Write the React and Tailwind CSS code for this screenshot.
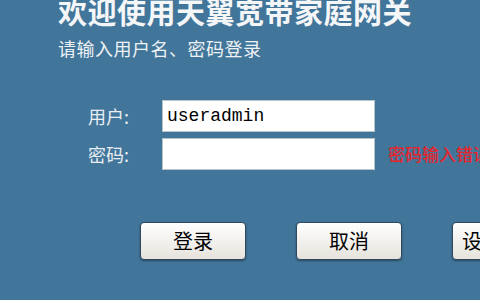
import React from 'react'

const CN = { fontFamily: '"Noto Sans CJK SC", "Liberation Sans", sans-serif' }

function Btn({ children, className = 'justify-center' }) {
  return (
    <button
      className={`w-[106px] h-[38px] shrink-0 flex items-center rounded-[4px] border border-[#2f4a5e] bg-gradient-to-b from-white to-[#e6e3dc] text-[20px] leading-none text-black shadow-[0_1px_2px_rgba(0,0,0,0.4)] ${className}`}
      style={CN}
    >
      {children}
    </button>
  )
}

export default function App() {
  return (
    <div className="w-[480px] h-[300px] overflow-hidden bg-[#41759a]" style={CN}>
      <div className="pl-[58px] -mt-[7px]">
        <h1 className="text-[29px] leading-[36px] font-bold text-[#f4f6f8] tracking-[0.5px] whitespace-nowrap">
          欢迎使用天翼宽带家庭网关
        </h1>
        <p className="mt-[7px] text-[18px] leading-[24px] tracking-[0.5px] text-[#eef2f5] whitespace-nowrap">
          请输入用户名、密码登录
        </p>
      </div>

      <div className="mt-[40px] pl-[88px] flex flex-col gap-[6px]">
        <div className="flex items-center">
          <span className="w-[74px] shrink-0 text-[18px] text-[#e8eef3]">用户:</span>
          <div className="w-[213px] h-[32px] shrink-0 bg-white border border-[#b8c4cc] flex items-center pl-[4px]">
            <span className="text-[18px] text-black" style={{ fontFamily: '"Liberation Mono", monospace' }}>
              useradmin
            </span>
          </div>
        </div>
        <div className="flex items-center">
          <span className="w-[74px] shrink-0 text-[18px] text-[#e8eef3]">密码:</span>
          <div className="w-[213px] h-[32px] shrink-0 bg-white border border-[#b8c4cc]" />
          <span className="ml-[13px] shrink-0 text-[17px] font-medium text-[#e3262f] whitespace-nowrap">密码输入错误</span>
        </div>
      </div>

      <div className="mt-[52px] pl-[140px] flex gap-[50px]">
        <Btn>登录</Btn>
        <Btn>取消</Btn>
        <Btn className="justify-start pl-[9px]">设置</Btn>
      </div>
    </div>
  )
}
